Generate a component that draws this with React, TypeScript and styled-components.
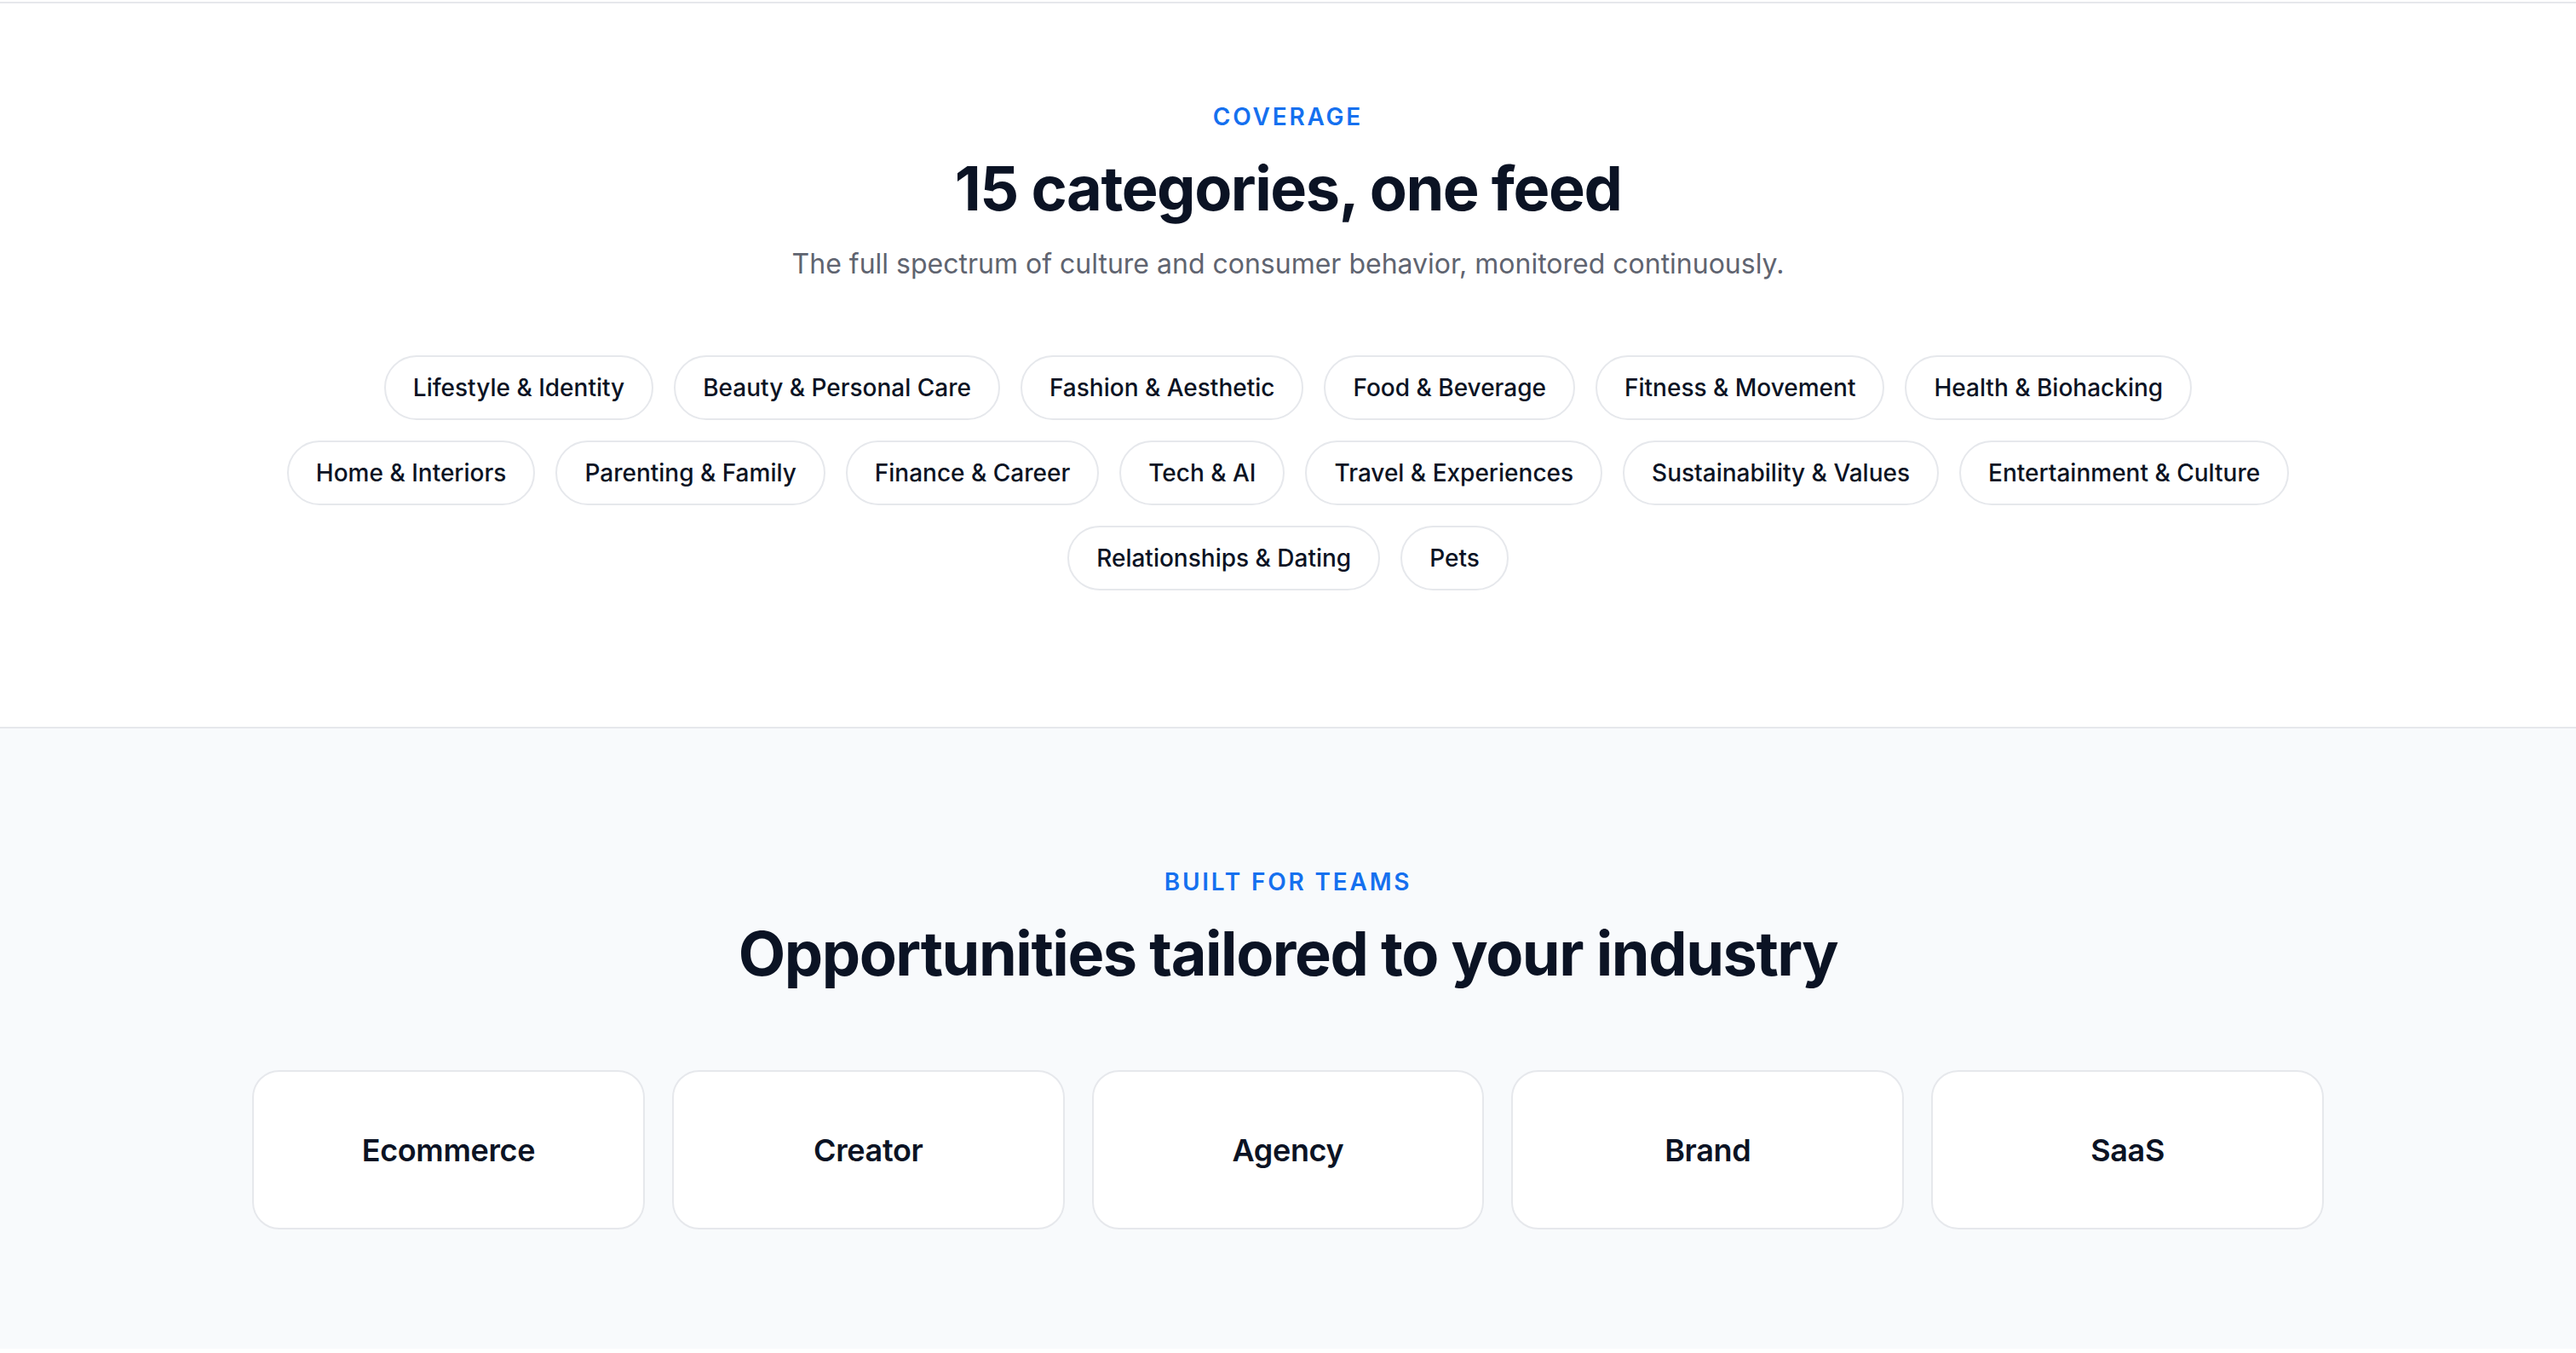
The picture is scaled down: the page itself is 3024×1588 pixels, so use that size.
import React from 'react'
import styled, { createGlobalStyle } from 'styled-components'

const GlobalStyle = createGlobalStyle`
    * {
        box-sizing: border-box;
    }
    body {
        margin: 0;
        background-color: #FFFFFF;
        font-family: Inter, "Noto Sans", sans-serif;
        color: #0b1324;
        -webkit-font-smoothing: antialiased;
    }
`

const Page = styled.div`
    padding-top: 2px;
    background-color: #FFFFFF;
`

const Section = styled.section<{ $muted?: boolean }>`
    border-top: 2px solid #e6e8ec;
    background-color: ${(p) => (p.$muted ? '#f8fafc' : '#FFFFFF')};
    padding: ${(p) => (p.$muted ? '160px 64px 140px' : '113px 64px 160px')};
    display: flex;
    flex-direction: column;
    align-items: center;
`

const Eyebrow = styled.p`
    margin: 0 0 20px;
    font-family: Inter, sans-serif;
    font-size: 28px;
    line-height: 40px;
    font-weight: 600;
    letter-spacing: 0.1em;
    color: #1570ef;
    text-transform: uppercase;
`

const Heading = styled.h2`
    margin: 0;
    font-family: Inter, sans-serif;
    font-size: 72px;
    line-height: 88px;
    font-weight: 700;
    letter-spacing: -0.02em;
    color: #0b1324;
    text-align: center;
`

const Subtitle = styled.p`
    margin: 20px 0 0;
    font-family: Inter, sans-serif;
    font-size: 32px;
    line-height: 50px;
    color: #5f6470;
    text-align: center;
`

const PillWrap = styled.div`
    margin-top: 82px;
    max-width: 2400px;
    display: flex;
    flex-wrap: wrap;
    justify-content: center;
    gap: 24px;
`

const Pill = styled.span`
    display: inline-flex;
    align-items: center;
    height: 76px;
    padding: 0 32px;
    border: 2px solid #e6e8ec;
    border-radius: 999px;
    background-color: #FFFFFF;
    font-family: Inter, sans-serif;
    font-size: 28px;
    font-weight: 500;
    color: #0b1324;
    white-space: nowrap;
`

const CardGrid = styled.div`
    margin-top: 93px;
    width: 100%;
    max-width: 2432px;
    display: grid;
    grid-template-columns: repeat(5, 1fr);
    gap: 32px;
`

const Card = styled.div`
    height: 187px;
    display: flex;
    align-items: center;
    justify-content: center;
    border: 2px solid #e6e8ec;
    border-radius: 32px;
    background-color: #FFFFFF;
    font-family: Inter, sans-serif;
    font-size: 36px;
    font-weight: 600;
    letter-spacing: -0.01em;
    color: #0b1324;
`

const categories = [
    'Lifestyle & Identity',
    'Beauty & Personal Care',
    'Fashion & Aesthetic',
    'Food & Beverage',
    'Fitness & Movement',
    'Health & Biohacking',
    'Home & Interiors',
    'Parenting & Family',
    'Finance & Career',
    'Tech & AI',
    'Travel & Experiences',
    'Sustainability & Values',
    'Entertainment & Culture',
    'Relationships & Dating',
    'Pets',
]

const industries = ['Ecommerce', 'Creator', 'Agency', 'Brand', 'SaaS']

const App: React.FC = () => {
    return (
        <Page>
            <GlobalStyle />
            <Section>
                <Eyebrow>Coverage</Eyebrow>
                <Heading>15 categories, one feed</Heading>
                <Subtitle>The full spectrum of culture and consumer behavior, monitored continuously.</Subtitle>
                <PillWrap>
                    {categories.map((item) => (
                        <Pill key={item}>{item}</Pill>
                    ))}
                </PillWrap>
            </Section>
            <Section $muted>
                <Eyebrow>Built for teams</Eyebrow>
                <Heading>Opportunities tailored to your industry</Heading>
                <CardGrid>
                    {industries.map((item) => (
                        <Card key={item}>{item}</Card>
                    ))}
                </CardGrid>
            </Section>
        </Page>
    )
}

export default App
